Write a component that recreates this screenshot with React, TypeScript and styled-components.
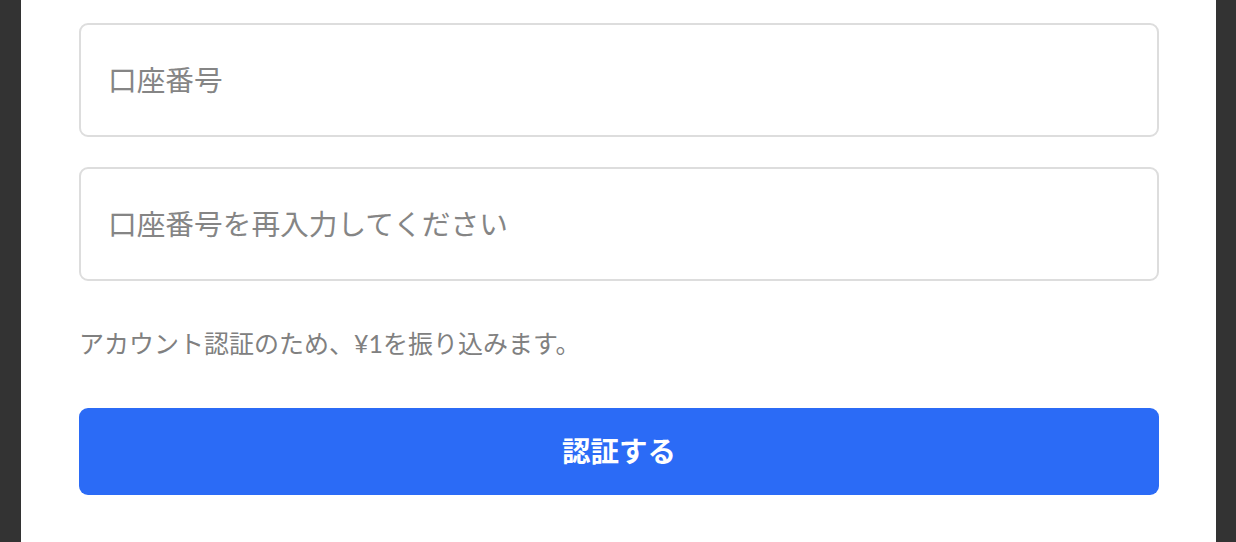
import styled, { createGlobalStyle } from 'styled-components';

const GlobalStyle = createGlobalStyle`
  html, body {
    margin: 0;
    padding: 0;
    background: #333333;
    height: 100%;
    overflow: hidden;
  }
  #root {
    height: 100%;
  }
`;

const Page = styled.div`
  height: 100%;
  padding: 0 20px 0 21px;
  box-sizing: border-box;
  font-family: "Lato", "Noto Sans CJK JP", sans-serif;
`;

const Panel = styled.div`
  background: #ffffff;
  height: 100%;
  padding: 23px 57px 0 58px;
  box-sizing: border-box;
  display: flex;
  flex-direction: column;
`;

const Field = styled.input`
  display: block;
  width: 100%;
  height: 114px;
  box-sizing: border-box;
  border: 2px solid #dddddd;
  border-radius: 9px;
  padding: 0 27px;
  font-family: "Lato", "Noto Sans CJK JP", sans-serif;
  font-size: 28.7px;
  font-weight: 400;
  color: #333;
  outline: none;
  background: #fff;

  & + & {
    margin-top: 30px;
  }

  &::placeholder {
    color: #858585;
  }
`;

const Note = styled.p`
  margin: 46px 0 0;
  font-size: 25px;
  font-weight: 400;
  line-height: 32px;
  color: #808080;
`;

const SubmitButton = styled.button`
  margin-top: 49px;
  width: 100%;
  height: 87px;
  flex-shrink: 0;
  border: none;
  border-radius: 9px;
  background: #2b6bf6;
  color: #ffffff;
  font-family: "Lato", "Noto Sans CJK JP", sans-serif;
  font-size: 28.5px;
  font-weight: 700;
  padding: 0 0 4px;
  cursor: pointer;
`;

const App = () => {
  return (
    <>
      <GlobalStyle />
      <Page>
        <Panel>
          <Field placeholder="口座番号" />
          <Field placeholder="口座番号を再入力してください" />
          <Note>アカウント認証のため、¥1を振り込みます。</Note>
          <SubmitButton>認証する</SubmitButton>
        </Panel>
      </Page>
    </>
  );
};

export default App;
